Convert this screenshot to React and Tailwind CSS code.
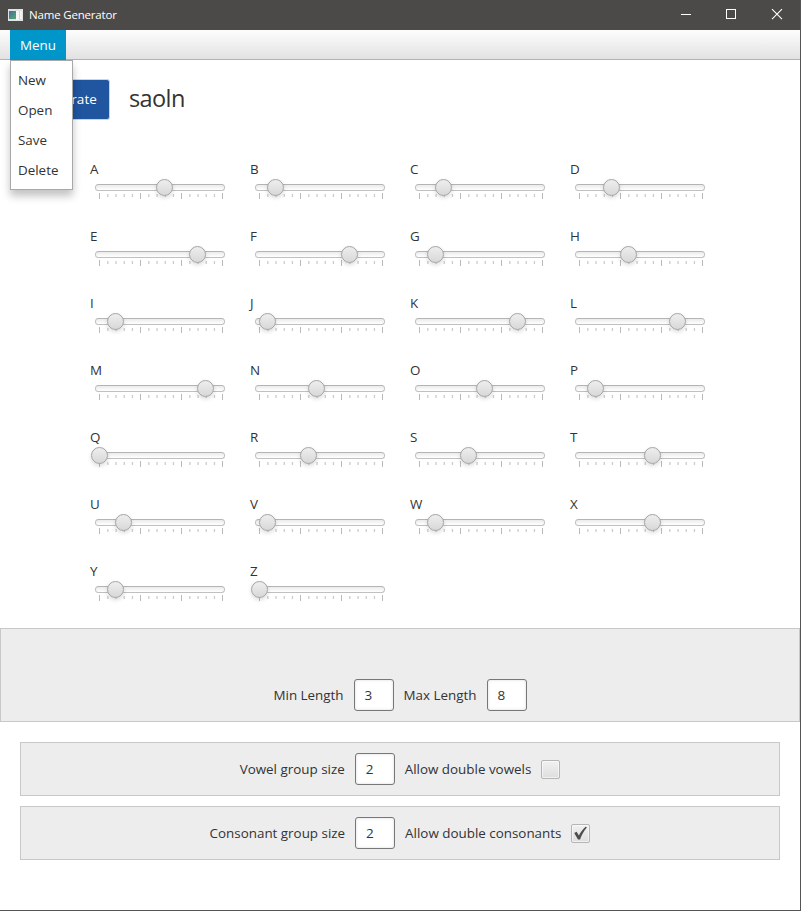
const sliders = [
  ["A", 8], ["B", 2], ["C", 3], ["D", 4],
  ["E", 12], ["F", 11], ["G", 2], ["H", 6],
  ["I", 2], ["J", 1], ["K", 12], ["L", 12],
  ["M", 13], ["N", 7], ["O", 8], ["P", 2],
  ["Q", 0], ["R", 6], ["S", 6], ["T", 9],
  ["U", 3], ["V", 1], ["W", 2], ["X", 9],
  ["Y", 2], ["Z", 0],
];

const ticks = Array.from({ length: 16 }, (_, i) => i);

function LetterSlider({ letter, value }) {
  return (
    <div className="h-[67px] w-[140px]">
      <div className="h-[22px] leading-[22px]">{letter}</div>
      <div className="relative h-6 pt-[4px] pl-[5px]">
        <div className="h-[7px] w-[130px] rounded-full border border-[#c0c0c0] border-t-[#b4b4b4] bg-linear-to-b from-[#ebebeb] to-white" />
        <svg className="mt-[2px] block" width="130" height="6">
          {ticks.map((i) =>
            i % 5 === 0 ? (
              <rect key={i} x={4 + i * 8.2} y="0" width="1" height="6" fill="#bababa" />
            ) : (
              <rect key={i} x={4 + i * 8.2} y="1" width="1.3" height="3" fill="#cccccc" />
            )
          )}
        </svg>
        <div
          className="absolute -top-px size-[17px] rounded-full border border-[#a3a3a3] bg-linear-to-b from-[#eeeeee] to-[#d8d8d8] shadow-[0_2px_4px_rgba(0,0,0,0.14)]"
          style={{ left: 0.6 + value * 8.2 }}
        />
      </div>
    </div>
  );
}

function NumberField({ value }) {
  return (
    <div className="h-8 w-10 rounded-[3px] border border-[#777777] bg-white pl-[10px] text-[13.5px] leading-[31px] shadow-[inset_0_0_3px_rgba(0,0,0,0.15)]">
      {value}
    </div>
  );
}

function CheckBox({ checked }) {
  return (
    <div className="flex size-[19px] items-center justify-center rounded-[2px] border border-[#b5b5b5] bg-linear-to-b from-[#f1f1f1] to-[#dedede] shadow-[inset_0_0_0_1px_rgba(255,255,255,0.55)]">
      {checked && (
        <svg width="15" height="15" viewBox="0 0 15 15">
          <path d="M1.2 7L3.6 5.8L5.9 9.6C7.6 6.2 9.9 3.1 12.9 0.6L13.8 1.4C10.8 4.8 8.6 9 7 13.4H5Z" fill="#4d4d4d" />
        </svg>
      )}
    </div>
  );
}

export default function App() {
  return (
    <div className="relative flex h-[911px] w-[801px] flex-col overflow-hidden border-r border-b border-[#555555] bg-white font-['Open_Sans','Noto_Sans',sans-serif] text-[13.4px] text-[#333333]">
      <header className="-mr-px flex h-[30px] shrink-0 items-center bg-[#4c4a48] text-white">
        <svg className="ml-2" width="15" height="12" viewBox="0 0 15 12">
          <defs>
            <linearGradient id="appIcon" x1="0" y1="0" x2="1" y2="1">
              <stop offset="0" stopColor="#3e70a5" />
              <stop offset="1" stopColor="#5aa66a" />
            </linearGradient>
          </defs>
          <rect width="15" height="12" fill="#dfe3e3" />
          <rect x="1" y="2" width="7" height="8" fill="url(#appIcon)" />
          <rect x="8" y="2" width="3" height="9" fill="#f5f7f7" />
          <rect x="12" y="2" width="2" height="8" fill="#f2f2f2" />
          <rect x="11" y="2" width="1" height="9" fill="#d5d9d9" />
        </svg>
        <div className="ml-[6px] text-[11.5px] tracking-[-0.18px]">Name Generator</div>
        <svg className="ml-auto" width="121" height="30" viewBox="680 0 121 30" fill="none" stroke="white">
          <path d="M681 14.5H691" />
          <rect x="726.5" y="9.5" width="9" height="9" />
          <path d="M772 9.2L782 19.2M782 9.2L772 19.2" strokeWidth="1.1" />
        </svg>
      </header>

      <nav className="flex h-[30px] shrink-0 border-b border-[#b3b3b3] bg-linear-to-b from-[#fdfdfd] to-[#e2e2e2] pl-[10px]">
        <div className="h-[30px] w-14 bg-[#0096c9] text-center leading-[30px] text-white">Menu</div>
      </nav>

      <div className="flex h-[98px] shrink-0 items-start pt-[19px] pl-5">
        <div className="flex h-[41px] w-[90px] items-center justify-end rounded-[3px] border border-[#c6d6ea] bg-[#20559f] pr-3 text-[13.5px] tracking-[0.1px] text-white">
          Generate
        </div>
        <div className="ml-[19px] text-[23.5px] leading-[38px] tracking-[-0.6px]">saoln</div>
      </div>

      <div className="grid h-[470px] shrink-0 grid-cols-[repeat(4,160px)] content-start pl-[90px]">
        {sliders.map(([letter, value]) => (
          <LetterSlider key={letter} letter={letter} value={value} />
        ))}
      </div>

      <section className="flex h-[94px] shrink-0 items-end justify-center gap-[10px] border border-[#c8c8c8] bg-[#ededed] pb-[10px]">
        <div className="leading-8">Min Length</div>
        <NumberField value="3" />
        <div className="leading-8">Max Length</div>
        <NumberField value="8" />
      </section>

      <div className="flex flex-col gap-[10px] px-5 pt-5">
        <section className="flex h-[54px] items-center justify-center gap-[10px] border border-[#c8c8c8] bg-[#ededed]">
          <div className="leading-8">Vowel group size</div>
          <NumberField value="2" />
          <div className="leading-8">Allow double vowels</div>
          <CheckBox />
        </section>
        <section className="flex h-[54px] items-center justify-center gap-[10px] border border-[#c8c8c8] bg-[#ededed]">
          <div className="leading-8">Consonant group size</div>
          <NumberField value="2" />
          <div className="leading-8">Allow double consonants</div>
          <CheckBox checked />
        </section>
      </div>

      <div className="absolute top-[60px] left-[10px] h-[130px] w-[63px] border border-[#a8a8a8] bg-white pt-1 pl-[7px] shadow-[0_6px_8px_rgba(0,0,0,0.24)]">
        {["New", "Open", "Save", "Delete"].map((item) => (
          <div key={item} className="h-[30px] leading-[30px]">{item}</div>
        ))}
      </div>
    </div>
  );
}
